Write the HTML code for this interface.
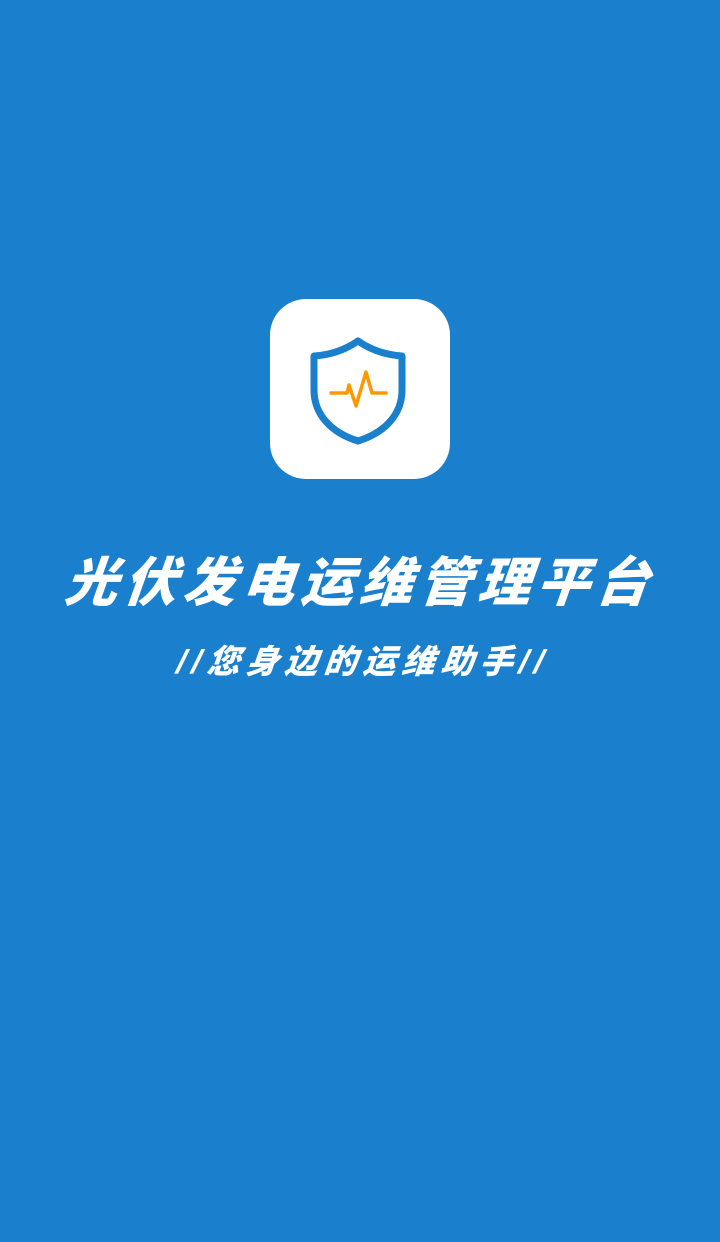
<!DOCTYPE html>
<html><head><meta charset="utf-8"><style>
html,body{margin:0;padding:0}
body{width:720px;height:1242px;background:#1a7fcc;position:relative;overflow:hidden;font-family:"Liberation Sans","Noto Sans CJK SC",sans-serif;color:#fff}
.icon{position:absolute;left:270px;top:299px;width:180px;height:180px;background:#fff;border-radius:36px}
.t1{position:absolute;left:0;width:720px;top:550px;text-align:center;font-size:53px;font-weight:900;font-style:italic;letter-spacing:6px;line-height:68px;transform:skewX(-6deg)}
.t2{position:absolute;left:3px;width:720px;top:641px;text-align:center;font-size:33px;font-weight:900;font-style:italic;letter-spacing:6px;line-height:42px;transform:skewX(-6deg)}
</style></head><body>
<div class="icon"></div>
<svg style="position:absolute;left:0;top:0" width="720" height="600">
<path d="M358 341 C345 350 330 355 314 356 L314 390 C314 415 332 433 358 441 C384 433 402 415 402 390 L402 356 C386 355 371 350 358 341 Z" fill="none" stroke="#1a7fcc" stroke-width="7" stroke-linejoin="round"/>
<path d="M331 393 L347 393 L349 385 L356 406 L366 372 L372 393 L386 393" fill="none" stroke="#ff9800" stroke-width="3.5" stroke-linejoin="round" stroke-linecap="round"/>
</svg>
<div class="t1">光伏发电运维管理平台</div>
<div class="t2">//您身边的运维助手//</div>
</body></html>
